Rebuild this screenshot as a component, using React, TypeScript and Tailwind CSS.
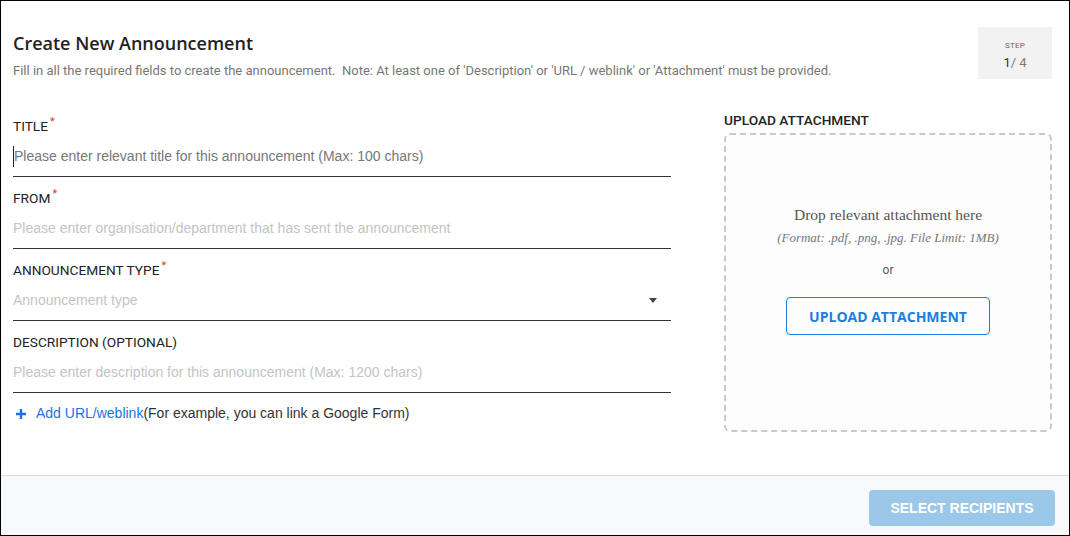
import React from 'react';

interface FieldProps {
  label: string;
  placeholder: string;
  required?: boolean;
  focused?: boolean;
  select?: boolean;
}

const Field = ({ label, placeholder, required, focused, select }: FieldProps) => {
  return (
    <div className="flex flex-col">
      <div className="flex h-[22px] items-center font-['Roboto'] text-[13.7px] text-[#222]">
        {label}
        {required && <span className="ml-[2px] -mt-[8px] text-[11px] text-[#e53935]">*</span>}
      </div>
      <div className="flex h-[40px] items-center justify-between border-b border-[#333] font-['Liberation_Sans'] text-[14px]">
        <span className={focused ? 'border-l border-[#222] text-[#777]' : 'text-[#c4c4c4]'}>{placeholder}</span>
        {select && (
          <svg width="8" height="5" viewBox="0 0 8 5" className="mr-[14px]">
            <path d="M0 0h8L4 5z" fill="#444" />
          </svg>
        )}
      </div>
    </div>
  );
};

const App = () => {
  return (
    <div className="flex h-[536px] w-[1070px] flex-col border border-black bg-white">
      <div className="flex flex-1 flex-col px-[12px]">
        <div className="flex items-start justify-between pt-[26px]">
          <div className="pt-[4px]">
            <h1 className="font-['Open_Sans'] text-[18px] font-semibold leading-[24px] text-[#222]">
              Create New Announcement
            </h1>
            <p className="mt-[7px] font-['Roboto'] text-[13px] leading-[18px] text-[#777]">
              Fill in all the required fields to create the announcement.&nbsp; Note: At least one of 'Description' or 'URL / weblink' or 'Attachment' must be provided.
            </p>
          </div>
          <div className="mr-[5px] flex h-[52px] w-[74px] flex-col items-center bg-[#f2f2f2] pt-[14px] font-['Roboto']">
            <span className="text-[8px] leading-[10px] tracking-wide text-[#666]">STEP</span>
            <span className="mt-[4px] text-[13px] leading-[16px] text-[#777]">
              <span className="text-[#333]">1</span>/ 4
            </span>
          </div>
        </div>

        <div className="mt-[35px] flex justify-between">
          <div className="flex w-[658px] flex-col gap-[10px]">
            <Field label="TITLE" required focused placeholder="Please enter relevant title for this announcement (Max: 100 chars)" />
            <Field label="FROM" required placeholder="Please enter organisation/department that has sent the announcement" />
            <Field label="ANNOUNCEMENT TYPE" required select placeholder="Announcement type" />
            <Field label="DESCRIPTION (OPTIONAL)" placeholder="Please enter description for this announcement (Max: 1200 chars)" />
            <div className="flex items-center font-['Liberation_Sans'] text-[14px]">
              <svg width="10" height="10" viewBox="0 0 10 10" className="ml-[3px] mr-[10px]">
                <path d="M5 0v10M0 5h10" stroke="#1a73e8" strokeWidth="2.4" />
              </svg>
              <span className="text-[#1a73e8]">Add URL/weblink</span>
              <span className="text-[#333]">(For example, you can link a Google Form)</span>
            </div>
          </div>

          <div className="-mt-[2px] mr-[5px] flex w-[328px] flex-col">
            <div className="font-['Roboto'] text-[13.7px] font-medium leading-[14px] text-[#222]">UPLOAD ATTACHMENT</div>
            <div className="mt-[6px] flex h-[299px] flex-col items-center rounded-[6px] border-2 border-dashed border-[#c9c9c9] bg-[#fdfdfd] pt-[71px]">
              <div className="font-['Liberation_Serif'] text-[15.5px] leading-[18px] text-[#555]">Drop relevant attachment here</div>
              <div className="mt-[6px] font-['Liberation_Serif'] text-[13px] leading-[15px] italic text-[#777]">
                (Format: .pdf, .png, .jpg. File Limit: 1MB)
              </div>
              <div className="mt-[18px] font-['Roboto'] text-[12px] leading-[14px] text-[#555]">or</div>
              <button className="mt-[20px] h-[38px] w-[204px] rounded-[4px] border border-[#1a7fe0] font-['Open_Sans'] text-[14px] font-bold text-[#1a7fe0]">
                UPLOAD ATTACHMENT
              </button>
            </div>
          </div>
        </div>
      </div>

      <div className="flex h-[60px] items-center justify-end border-t border-[#dcdcdc] bg-[#f8f9fb] pr-[14px]">
        <button className="mt-[5px] h-[36px] w-[186px] rounded-[4px] bg-[#9bc7e8] font-['Liberation_Sans'] text-[14px] font-bold text-white">
          SELECT RECIPIENTS
        </button>
      </div>
    </div>
  );
};

export default App;
